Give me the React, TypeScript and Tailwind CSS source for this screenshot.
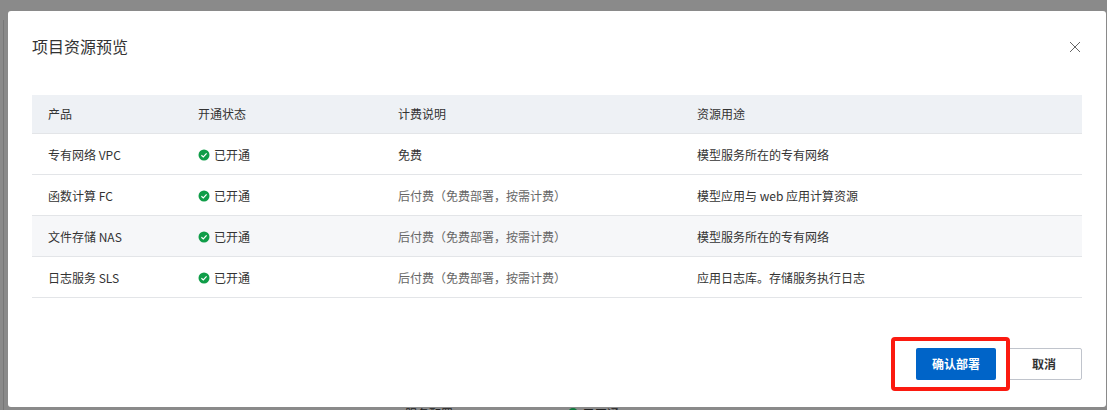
const rows = [
  { name: "专有网络 VPC", billing: "免费", free: true, usage: "模型服务所在的专有网络" },
  { name: "函数计算 FC", billing: "后付费（免费部署，按需计费）", free: false, usage: "模型应用与 web 应用计算资源" },
  { name: "文件存储 NAS", billing: "后付费（免费部署，按需计费）", free: false, usage: "模型服务所在的专有网络" },
  { name: "日志服务 SLS", billing: "后付费（免费部署，按需计费）", free: false, usage: "应用日志库。存储服务执行日志" },
];

const gridCols = "grid grid-cols-[150px_200px_299px_1fr]";

const CheckIcon = () => (
  <svg width="12" height="12" viewBox="0 0 12 12" className="mr-[4px] shrink-0">
    <circle cx="6" cy="6" r="5.5" fill="#0f9d48" />
    <path d="M3.4 6.2 L5.3 7.9 L8.6 4.4" fill="none" stroke="#fff" strokeWidth="1.2" />
  </svg>
);

export default function App() {
  return (
    <div className="relative h-[410px] w-[1107px] overflow-hidden bg-[#8a8a8a] pt-[11px] pl-[8px] text-[12px] text-[#333] [font-family:'Noto_Sans_CJK_SC','Noto_Sans',sans-serif]">
      {/* 遮罩下露出的页面内容 */}
      <div className="absolute top-[406px] left-[405px] text-[12px] leading-[16px] text-[#222]">服务配置</div>
      <div className="absolute top-[408px] left-[568px] size-[10px] rounded-full bg-[#0f7a3c]" />
      <div className="absolute top-[406px] left-[583px] text-[12px] leading-[16px] text-[#222]">已开通</div>
      <div className="absolute top-[20px] left-[3px] h-[390px] w-px bg-[#777]" />

      <div className="relative flex h-[396px] w-[1098px] flex-col rounded-[3px] bg-white">
        <div className="flex items-start justify-between pt-[24px] pr-[25px] pl-[24px]">
          <h2 className="text-[16px] leading-[22px] font-normal text-[#333]">项目资源预览</h2>
          <svg width="12" height="12" viewBox="0 0 12 12" className="mt-[6px] text-[#666]">
            <path d="M1 1 L11 11 M11 1 L1 11" stroke="currentColor" strokeWidth="1" fill="none" />
          </svg>
        </div>

        <div className="mx-[24px] mt-[38px]">
          <div className={`${gridCols} h-[39px] items-center border-b border-[#e3e5e8] bg-[#eef1f5]`}>
            <div className="pl-[16px]">产品</div>
            <div className="pl-[16px]">开通状态</div>
            <div className="pl-[16px]">计费说明</div>
            <div className="pl-[16px]">资源用途</div>
          </div>
          {rows.map((row, index) => (
            <div
              key={row.name}
              className={`${gridCols} h-[41px] items-center border-b border-[#e3e5e8] pt-[2px] ${index === 2 ? "bg-[#f6f7f9]" : ""}`}
            >
              <div className="pl-[16px]">{row.name}</div>
              <div className="flex items-center pl-[16px]">
                <CheckIcon />
                已开通
              </div>
              <div className={`pl-[16px] ${row.free ? "" : "text-[#666]"}`}>{row.billing}</div>
              <div className="pl-[16px]">{row.usage}</div>
            </div>
          ))}
        </div>

        <div className="mt-auto flex justify-end gap-[10px] pr-[24px] pb-[27px]">
          <button className="h-[32px] w-[80px] rounded-[2px] bg-[#0064c8] text-[12px] font-bold text-white">
            确认部署
          </button>
          <button className="h-[32px] w-[76px] rounded-[2px] border border-[#c0c4cc] bg-white text-[12px] font-bold text-[#333]">
            取消
          </button>
        </div>
      </div>

      {/* 红框标注 */}
      <div className="absolute top-[337px] left-[891px] h-[54px] w-[119px] rounded-[4px] border-[4px] border-[#fb1a10]" />
    </div>
  );
}
